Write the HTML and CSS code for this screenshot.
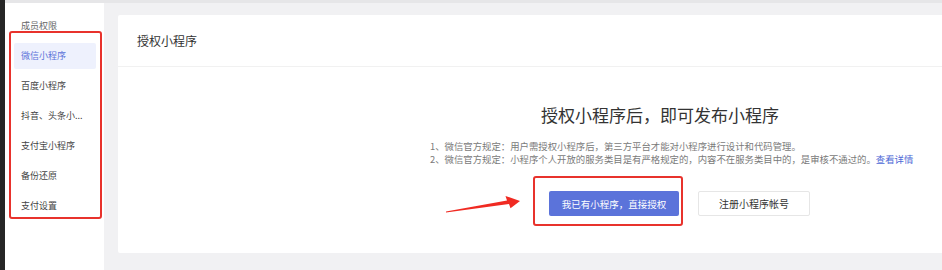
FILE: index.html
```html
<!DOCTYPE html>
<html lang="zh-CN">
<head>
<meta charset="utf-8">
<title>授权小程序</title>
<link rel="stylesheet" href="styles.css">
</head>
<body>
<div class="app">
  <div class="rail"></div>
  <div class="frame">
    <div class="topbar"></div>
    <div class="layout">
      <aside class="sidebar">
        <div class="nav-item first">成员权限</div>
        <div class="mark-box">
          <div class="nav-item active">微信小程序</div>
          <div class="nav-item">百度小程序</div>
          <div class="nav-item">抖音、头条小...</div>
          <div class="nav-item">支付宝小程序</div>
          <div class="nav-item">备份还原</div>
          <div class="nav-item">支付设置</div>
        </div>
      </aside>
      <main class="content">
        <section class="card">
          <header class="card-head">授权小程序</header>
          <div class="card-body">
            <h1 class="title">授权小程序后，即可发布小程序</h1>
            <div class="notes">
              <p>1、微信官方规定：用户需授权小程序后，第三方平台才能对小程序进行设计和代码管理。</p>
              <p>2、微信官方规定：小程序个人开放的服务类目是有严格规定的，内容不在服务类目中的，是审核不通过的。<a class="link" href="#">查看详情</a></p>
            </div>
            <div class="actions">
              <svg class="arrow" width="85" height="25" viewBox="0 0 85 25" aria-hidden="true">
                <polygon points="7,19.6 68,8.6 66.5,4 81,9 71.5,16.2 70,12 7,20.6" fill="#f02a22"/>
              </svg>
              <span class="mark-btn"><button class="btn btn-primary">我已有小程序，直接授权</button></span>
              <button class="btn btn-default">注册小程序帐号</button>
            </div>
          </div>
        </section>
      </main>
    </div>
  </div>
</div>
</body>
</html>
```

FILE: styles.css
```css
* { box-sizing: border-box; }
html, body { margin: 0; padding: 0; }
body {
  background: #f1f1f3;
  font-family: "Noto Sans CJK SC", "Noto Sans", sans-serif;
  color: #333;
  width: 942px;
  height: 270px;
  overflow: hidden;
}
.app { display: flex; height: 270px; }
.rail { width: 5px; background: #262626; flex: none; }
.frame { flex: 1; display: flex; flex-direction: column; }
.topbar { height: 3px; background: #e6e6e8; flex: none; }
.layout { flex: 1; display: flex; }

.sidebar {
  width: 99px;
  background: #fff;
  padding: 10px 0 0 4px;
  flex: none;
}
.nav-item {
  height: 26px;
  line-height: 26px;
  font-size: 9px;
  color: #444;
  padding-left: 7px;
  width: 82px;
  margin-left: 3px;
  white-space: nowrap;
  border-radius: 2px;
}
.nav-item.first { height: 18px; margin-left: 5px; color: #666; }
.mark-box {
  width: 93px;
  border: 2px solid #e8322c;
  border-radius: 3px;
  padding: 10px 0 0 0;
  display: flex;
  flex-direction: column;
  gap: 4px;
  height: 188px;
}
.nav-item.active { background: #eef1fd; color: #5b72d9; }

.content { flex: 1; padding: 12px 0 0 14px; }
.card {
  background: #fff;
  height: 238px;
  border-radius: 2px 0 0 2px;
}
.card-head {
  height: 52px;
  line-height: 52px;
  padding-left: 19px;
  font-size: 12px;
  color: #333;
  border-bottom: 1px solid #f1f1f1;
}
.card-body {
  display: flex;
  flex-direction: column;
  align-items: flex-start;
  padding-left: 312px;
}
.title {
  margin: 36px 0 0 111px;
  font-size: 17px;
  font-weight: normal;
  line-height: 24px;
  color: #333;
}
.notes { margin-top: 13px; font-size: 9.4px; color: #7a7a7a; line-height: 13px; }
.notes p { margin: 0; white-space: nowrap; }
.link { color: #4c68d6; text-decoration: none; }

.actions {
  position: relative;
  margin: 10px 0 0 103px;
  display: flex;
  align-items: flex-start;
}
.arrow { position: absolute; left: -94px; top: 16px; }
.mark-btn {
  display: block;
  border: 2px solid #e8322c;
  border-radius: 3px;
  padding: 13px 2px 8px 14px;
}
.btn {
  display: block;
  height: 25px;
  font-family: inherit;
  font-size: 9.5px;
  border-radius: 2px;
  cursor: pointer;
  padding: 0;
  white-space: nowrap;
  text-align: center;
}
.btn-primary {
  background: #5b73da;
  color: #fff;
  border: none;
  width: 130px;
}
.btn-default {
  margin: 15px 0 0 15px;
  background: #fff;
  color: #333;
  border: 1px solid #e6e6e6;
  width: 112px;
  font-size: 10px;
}
```
